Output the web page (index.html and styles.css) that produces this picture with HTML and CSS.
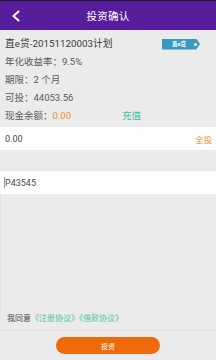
FILE: index.html
```html
<!DOCTYPE html>
<html lang="zh">
<head>
<meta charset="utf-8">
<title>投资确认</title>
<link rel="stylesheet" href="styles.css">
</head>
<body>
<div class="page">
  <div class="header">
    <svg class="back" width="10" height="12" viewBox="0 0 10 12"><path d="M7.5 1.5 L2.5 6 L7.5 10.5" fill="none" stroke="#fff" stroke-width="2" stroke-linecap="round" stroke-linejoin="round"/></svg>
    <div class="title">投资确认</div>
  </div>
  <div class="info">
    <div class="row first">
      <span class="name">直e贷-20151120003计划</span>
      <span class="badge"><span class="badge-text">直e贷</span><i class="dot"></i></span>
    </div>
    <div class="row">年化收益率：9.5%</div>
    <div class="row">期限：2 个月</div>
    <div class="row">可投：44053.56</div>
    <div class="row">现金余额：<span class="orange">0.00</span><span class="recharge">充值</span></div>
  </div>
  <div class="field amount">
    <span class="val">0.00</span>
    <span class="all">全投</span>
  </div>
  <div class="field code">
    <span class="cursor"></span><span class="val">P43545</span>
  </div>
  <div class="spacer"></div>
  <div class="footer">
    <div class="agree">我同意<span class="link">《注册协议》《借款协议》</span></div>
    <div class="btn">投资</div>
  </div>
</div>
</body>
</html>
```
FILE: styles.css
```css
html, body {
  margin: 0;
  padding: 0;
}
body {
  width: 216px;
  height: 360px;
  background: #ebebeb;
  font-family: Roboto, "Noto Sans CJK SC", sans-serif;
  color: #555;
  overflow: hidden;
}
.page {
  height: 360px;
  display: flex;
  flex-direction: column;
}
.header {
  height: 29px;
  border-top: 1px solid #1a1a1a;
  background: #561e9c;
  display: flex;
  align-items: center;
  justify-content: center;
  position: relative;
}
.back {
  position: absolute;
  left: 11px;
  top: 9px;
}
.title {
  color: #fff;
  font-size: 10.5px;
  letter-spacing: 0.2px;
}
.info {
  margin-top: 5px;
  padding: 0 5px;
}
.row {
  height: 18px;
  line-height: 18px;
  font-size: 9.5px;
  color: #5a5a5a;
  display: flex;
  align-items: center;
}
.row.first {
  justify-content: space-between;
}
.name {
  color: #3a3a3a;
  font-size: 9.8px;
}
.badge {
  width: 38px;
  height: 11px;
  margin-right: 11px;
  background: #3799bf;
  color: #fff;
  font-size: 5.5px;
  font-weight: bold;
  display: flex;
  align-items: center;
  position: relative;
  clip-path: polygon(0 0, 90% 0, 100% 50%, 90% 100%, 0 100%);
}
.badge-text {
  width: 34px;
  text-align: center;
  line-height: 11px;
}
.dot {
  position: absolute;
  right: 3px;
  top: 4px;
  width: 3px;
  height: 3px;
  border-radius: 50%;
  background: #fff;
}
.orange {
  color: #f0902f;
}
.recharge {
  color: #3cc09a;
  margin-left: 51px;
}
.field {
  background: #fff;
  height: 23px;
  display: flex;
  align-items: center;
  padding: 0 4px 0 5px;
  font-size: 9px;
  color: #4a4a4a;
}
.amount {
  margin-top: 2px;
  justify-content: space-between;
}
.all {
  color: #f0902f;
  font-size: 8.5px;
}
.code {
  margin-top: 21px;
  padding-left: 4px;
}
.cursor {
  width: 1px;
  height: 11px;
  background: #9a9a9a;
}
.spacer {
  flex: 1;
  border-left: 1px solid #dbe6e0;
}
.footer {
  height: 47px;
}
.agree {
  height: 12px;
  line-height: 12px;
  font-size: 8px;
  color: #4a4a4a;
  padding: 0 0 5px 7px;
  border-bottom: 1px solid #dedede;
}
.link {
  color: #4cc4a4;
}
.btn {
  margin: 6px auto 0;
  width: 104px;
  height: 17px;
  border-radius: 9px;
  background: #ee6a0a;
  color: #fff;
  font-size: 7px;
  display: flex;
  align-items: center;
  justify-content: center;
}
```
